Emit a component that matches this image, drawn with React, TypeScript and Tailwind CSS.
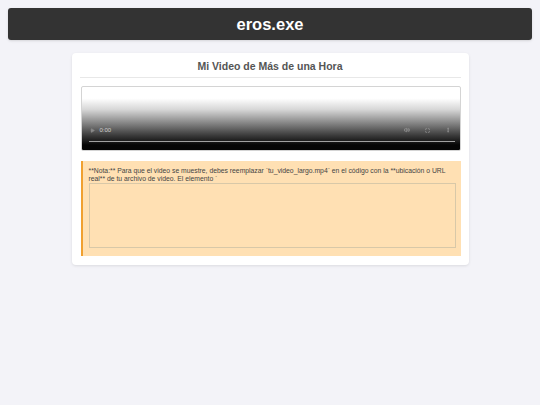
import { Maximize, MoreVertical, Play, Volume2 } from 'lucide-react';

function VideoPlaceholder() {
  return (
    <div className="relative h-[65px] w-full rounded-[2px] border border-[#d4d4d4] bg-[linear-gradient(to_bottom,#ffffff_18%,#d6d6d6_36%,#8a8a8a_56%,#3a3a3a_77%,#050505_92%)]">
      <div className="absolute left-[8px] right-[6px] top-[40px] flex items-center justify-between">
        <div className="flex items-center gap-[5px]">
          <Play className="h-[5px] w-[5px] fill-[#8a8a8a] text-[#8a8a8a]" />
          <span className="text-[6px] leading-none text-[#d0d0d0]">0:00</span>
        </div>
        <div className="flex items-center gap-[15px] pr-[3px]">
          <Volume2 className="h-[6px] w-[6px] text-[#9a9a9a]" strokeWidth={3} />
          <Maximize className="h-[5px] w-[5px] text-[#9a9a9a]" strokeWidth={3} />
          <MoreVertical className="h-[6px] w-[6px] text-[#9a9a9a]" strokeWidth={3} />
        </div>
      </div>
      <div className="absolute left-[7px] right-[5px] top-[54px] h-[1px] bg-[#a0a0a0]" />
    </div>
  );
}

export default function App() {
  return (
    <div className="min-h-[405px] bg-[#f3f3f8] px-2 pt-2 font-['Liberation_Sans',Arial,sans-serif]">
      <header className="flex h-[32px] items-center justify-center rounded-[3px] bg-[#333333] shadow-sm">
        <h1 className="text-[16.5px] font-bold text-white">eros.exe</h1>
      </header>

      <main className="mx-auto mt-[13px] w-[397px] rounded-[4px] bg-white px-2 pb-[9px] pt-[6px] shadow-[0_1px_3px_rgba(0,0,0,0.1)]">
        <h2 className="border-b border-[#e8e8e8] pb-[4px] text-center text-[10.5px] font-bold leading-[14px] text-[#555555]">
          Mi Video de Más de una Hora
        </h2>

        <div className="mt-[8px] pl-[1px]">
          <VideoPlaceholder />
        </div>

        <div className="ml-[1px] mt-[10px] h-[95px] border-l-2 border-[#f0a030] bg-[#ffe0b3] pb-[8px] pl-[6px] pr-[5px] pt-[6px]">
          <p className="text-[6.8px] leading-[7.5px] text-[#444444]">
            **Nota:** Para que el video se muestre, debes reemplazar `tu_video_largo.mp4` en el código con la **ubicación o URL real** de tu archivo de video. El elemento `
          </p>
          <div className="mt-[1px] h-[65px] border border-[#d8c8a8]" />
        </div>
      </main>
    </div>
  );
}
